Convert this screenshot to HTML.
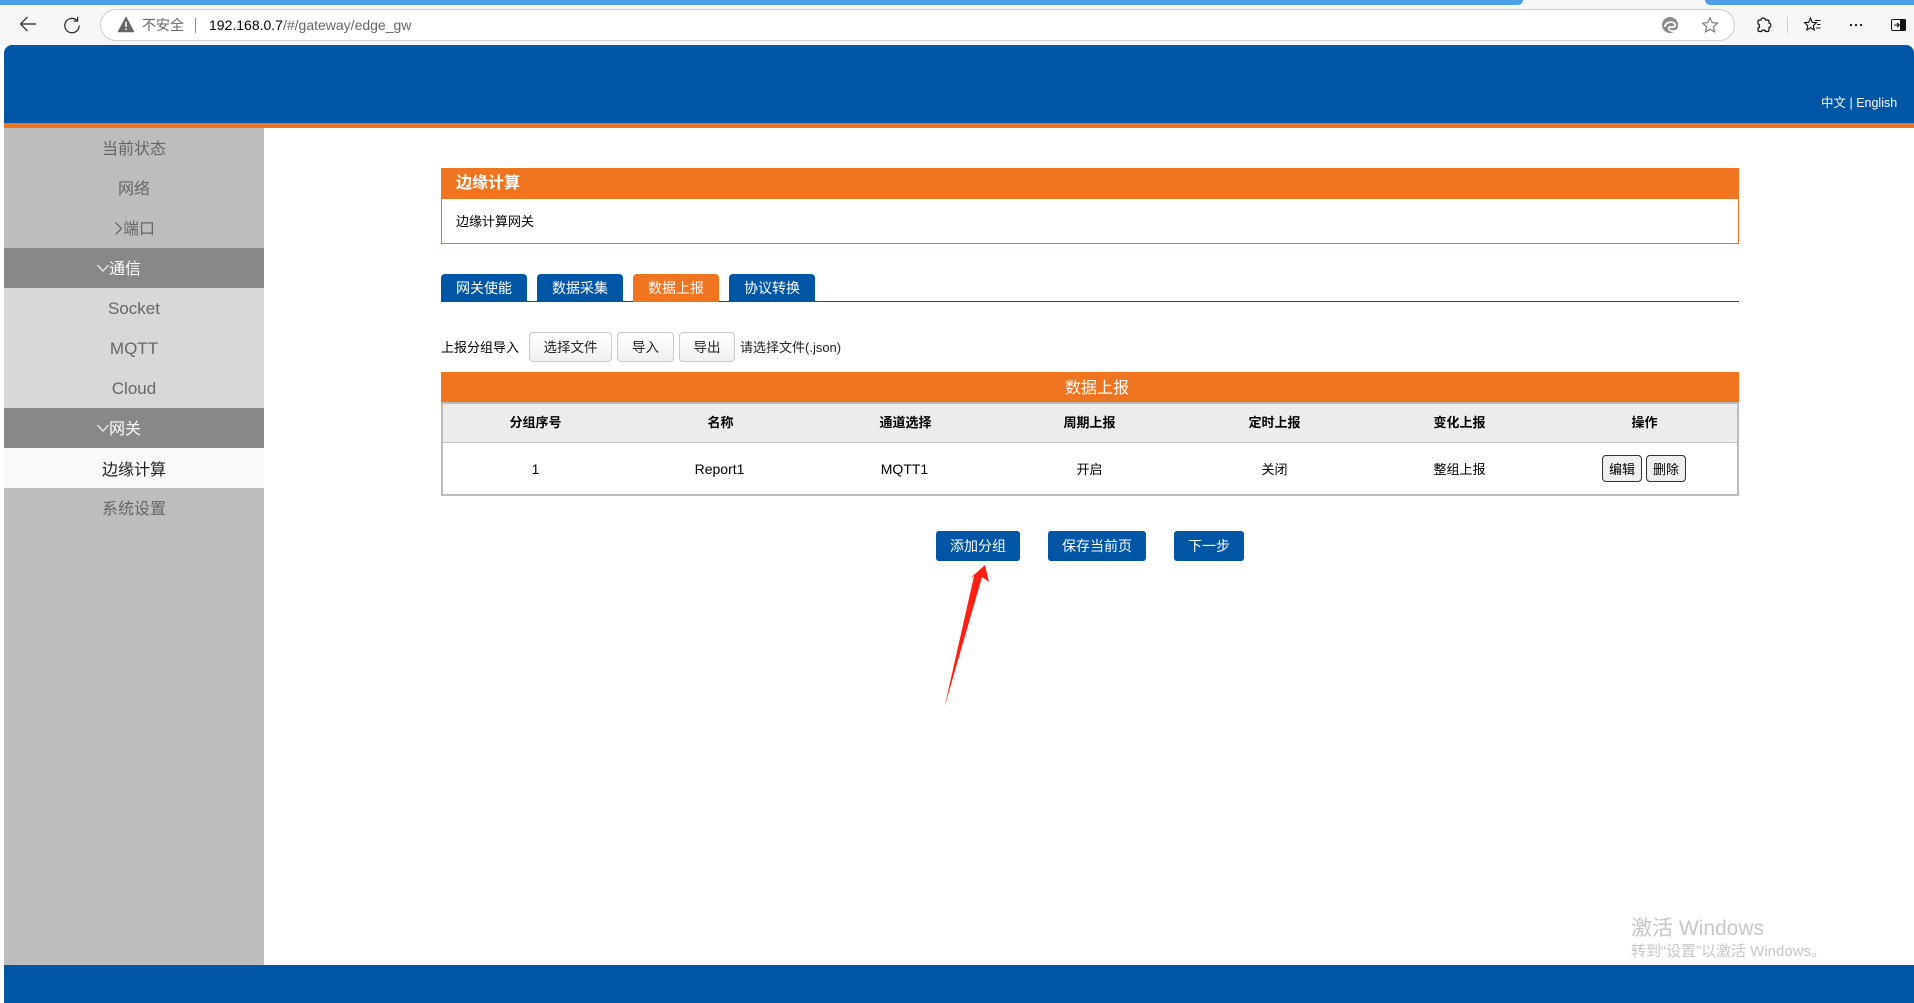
<!DOCTYPE html>
<html lang="zh-CN">
<head>
<meta charset="utf-8">
<title>边缘计算</title>
<style>
html,body{margin:0;padding:0;width:1914px;height:1003px;overflow:hidden;background:#fff}
body{position:relative;font-family:"Liberation Sans","Noto Sans CJK SC",sans-serif;color:#000}
.a{position:absolute;box-sizing:border-box}
.t{position:absolute;white-space:nowrap;line-height:1}
.c{display:flex;align-items:center;justify-content:center;white-space:nowrap}
.nav{left:4px;width:260px;height:40px;font-size:16px;color:#666;padding-bottom:2px}
.lat{font-size:17px;padding-bottom:0;padding-top:2px}
.tab{top:274px;width:86px;height:28px;background:#0055a5;color:#fff;font-size:14px;border-radius:4px 4px 0 0}
.fb{top:332px;height:30px;border:1px solid #c8c8c8;border-radius:4px;font-size:13.5px;color:#222;background:linear-gradient(#fff,#f0f0f0);padding-bottom:2px}
.th{top:404px;width:185px;height:38px;font-size:13px;font-weight:bold;padding-bottom:3px}
.td{top:443px;width:185px;height:51px;font-size:13px}
.td.l{font-size:14px}
.op{top:455px;width:40px;height:27px;background:#efefef;border:1px solid #333;border-radius:4px;font-size:13px}
.bb{top:531px;height:30px;background:#0055a5;color:#fff;font-size:14px;border-radius:3px}
svg{position:absolute;overflow:visible}
</style>
</head>
<body>
<!-- browser chrome -->
<div class="a" style="left:0;top:0;width:1914px;height:45px;background:#f7f7f7"></div>
<div class="a" style="left:0;top:0;width:1523px;height:5px;background:#4a9fe6;border-radius:0 0 6px 0"></div>
<div class="a" style="left:1705px;top:0;width:209px;height:5px;background:#4a9fe6;border-radius:0 0 0 6px"></div>
<div class="a" style="left:100px;top:9px;width:1635px;height:32px;background:#fff;border:1px solid #cfcfcf;border-radius:16px"></div>

<svg style="left:20px;top:16px" width="16" height="16" viewBox="0 0 16 16"><path d="M.5 8H16M.5 8L7.5 1M.5 8L7.5 15" fill="none" stroke="#222" stroke-width="1.2"/></svg>
<svg style="left:64px;top:17px" width="16" height="16" viewBox="0 0 16 16"><path d="M13 3.4A7.2 7.2 0 1 0 15.2 8.5M13.6 0V4H9.6" fill="none" stroke="#222" stroke-width="1.2"/></svg>
<svg style="left:118px;top:17px" width="16" height="15" viewBox="0 0 16 15"><path d="M8 .3L15.8 14.7H.2Z" fill="#666" stroke="#666" stroke-linejoin="round"/><path d="M8 4.8V10M8 11.2V12.9" stroke="#fff" stroke-width="1.5"/></svg>
<div class="t" style="left:142px;top:18px;font-size:14px;color:#666">不安全</div>
<div class="a" style="left:195px;top:18px;width:1px;height:15px;background:#888"></div>
<div class="t" style="left:209px;top:18px;font-size:14px;color:#666"><span style="color:#000">192.168.0.7</span>/#/gateway/edge_gw</div>

<svg style="left:1662px;top:17px" width="16" height="16" viewBox="0 0 16 16"><circle cx="8" cy="8" r="8" fill="#8a8a8a"/><path d="M2.5 10C4 5 10 3.5 13 7C14.5 9.5 11 10.5 8.5 10C6.5 9.8 6 11.5 7.5 13C9 14.5 12 14.8 15 13" fill="none" stroke="#fff" stroke-width="1.7"/></svg>
<svg style="left:1702px;top:17px" width="16" height="16" viewBox="0 0 16 16"><path d="M8 .8L10.2 5.6L15.4 6.2L11.5 9.7L12.6 14.9L8 12.3L3.4 14.9L4.5 9.7L.6 6.2L5.8 5.6Z" fill="none" stroke="#777" stroke-width="1.1"/></svg>
<svg style="left:1756px;top:17px" width="15" height="16" viewBox="0 0 15 16"><path d="M5 3C5 .3 9.5 .3 9.5 3H11.5C12.5 3 13 3.5 13 4.5V6C15.5 6 15.5 10.5 13 10.5V13C13 14 12.5 14.5 11.5 14.5H9.5C9.5 12.5 5.5 12.5 5.5 14.5H3.5C2.5 14.5 2 14 2 13V11C4 11 4 7 2 7V4.5C2 3.5 2.5 3 3.5 3Z" fill="none" stroke="#111" stroke-width="1.2"/></svg>
<div class="a" style="left:1787px;top:17px;width:1px;height:16px;background:#ccc"></div>
<svg style="left:1804px;top:17px" width="17" height="16" viewBox="0 0 17 16"><path d="M6.5 1L8.3 5.3L12.5 5.7L9.3 8.6L10.2 13L6.5 10.7L2.8 13L3.7 8.6L.5 5.7L4.7 5.3Z" fill="none" stroke="#111" stroke-width="1.1"/><path d="M11 3.5H16.5M13 7.5H16.5M12 11H16.5" stroke="#111" stroke-width="1"/></svg>
<svg style="left:1849px;top:23px" width="14" height="4" viewBox="0 0 14 4"><circle cx="2" cy="2" r="1.1" fill="#111"/><circle cx="7" cy="2" r="1.1" fill="#111"/><circle cx="12" cy="2" r="1.1" fill="#111"/></svg>
<svg style="left:1891px;top:19px" width="15" height="12" viewBox="0 0 15 12"><rect x=".5" y=".5" width="14" height="11" rx="1.5" fill="#fff" stroke="#111"/><rect x="9" y="0" width="6" height="12" rx="1.5" fill="#111"/><path d="M3 6H8M6 3.8L8.2 6L6 8.2" fill="none" stroke="#111" stroke-width="1.1"/></svg>

<!-- header -->
<div class="a" style="left:4px;top:45px;width:1910px;height:78px;background:#0055a5;border-radius:8px 8px 0 0"></div>
<div class="a" style="left:4px;top:123px;width:1910px;height:5px;background:#ee741f"></div>
<div class="t" style="left:1821px;top:97px;font-size:12.5px;color:#fff">中文 | English</div>

<!-- sidebar -->
<div class="a" style="left:4px;top:128px;width:260px;height:837px;background:#bdbdbd"></div>
<div class="a c nav" style="top:128px">当前状态</div>
<div class="a c nav" style="top:168px">网络</div>
<div class="a c nav" style="top:208px"><svg style="left:111px;top:14px" width="7" height="13" viewBox="0 0 7 13"><path d="M.5 .5L6.5 6.5L.5 12.5" fill="none" stroke="#555" stroke-width="1.1"/></svg><span style="margin-left:10px">端口</span></div>
<div class="a c nav" style="top:248px;background:#888;color:#fff"><svg style="left:93px;top:16px" width="12" height="8" viewBox="0 0 12 8"><path d="M.5 1L6 7L11.5 1" fill="none" stroke="#fff" stroke-width="1.1"/></svg><span style="margin-right:-2px;position:relative;left:-10px">通信</span></div>
<div class="a c nav lat" style="top:288px;background:#d8d8d8">Socket</div>
<div class="a c nav lat" style="top:328px;background:#d8d8d8">MQTT</div>
<div class="a c nav lat" style="top:368px;background:#d8d8d8">Cloud</div>
<div class="a c nav" style="top:408px;background:#888;color:#fff"><svg style="left:93px;top:16px" width="12" height="8" viewBox="0 0 12 8"><path d="M.5 1L6 7L11.5 1" fill="none" stroke="#fff" stroke-width="1.1"/></svg><span style="margin-right:-2px;position:relative;left:-10px">网关</span></div>
<div class="a c nav" style="top:448px;background:#f9f9f9;color:#222;padding-bottom:1px">边缘计算</div>
<div class="a c nav" style="top:488px">系统设置</div>

<!-- title box -->
<div class="a" style="left:441px;top:168px;width:1298px;height:76px;border:1px solid #ee741f"></div>
<div class="a" style="left:441px;top:168px;width:1298px;height:31px;background:#ee741f"></div>
<div class="t" style="left:456px;top:176px;font-size:16px;font-weight:bold;color:#fff">边缘计算</div>
<div class="t" style="left:456px;top:215px;font-size:13px">边缘计算网关</div>

<!-- tabs -->
<div class="a" style="left:441px;top:301px;width:1298px;height:1px;background:#3a4250"></div>
<div class="a c tab" style="left:441px">网关使能</div>
<div class="a c tab" style="left:537px">数据采集</div>
<div class="a c tab" style="left:633px;background:#ee741f">数据上报</div>
<div class="a c tab" style="left:729px">协议转换</div>

<!-- import row -->
<div class="t" style="left:441px;top:341px;font-size:13px">上报分组导入</div>
<div class="a c fb" style="left:529px;width:83px">选择文件</div>
<div class="a c fb" style="left:617px;width:57px">导入</div>
<div class="a c fb" style="left:679px;width:56px">导出</div>
<div class="t" style="left:740px;top:341px;font-size:13px;color:#222">请选择文件(.json)</div>

<!-- table -->
<div class="a c" style="left:441px;top:372px;width:1298px;height:30px;background:#ee741f;color:#fff;font-size:16px;padding-left:14px;padding-bottom:2px">数据上报</div>
<div class="a" style="left:441px;top:402px;width:1298px;height:94px;border:2px solid #bbb"></div>
<div class="a" style="left:443px;top:404px;width:1294px;height:38px;background:#ebecee"></div>
<div class="a" style="left:443px;top:442px;width:1294px;height:1px;background:#c4c4c4"></div>
<div class="a c th" style="left:443px">分组序号</div>
<div class="a c th" style="left:628px">名称</div>
<div class="a c th" style="left:813px">通道选择</div>
<div class="a c th" style="left:997px">周期上报</div>
<div class="a c th" style="left:1182px">定时上报</div>
<div class="a c th" style="left:1367px">变化上报</div>
<div class="a c th" style="left:1552px">操作</div>
<div class="a c td l" style="left:443px">1</div>
<div class="a c td l" style="left:627px">Report1</div>
<div class="a c td l" style="left:812px">MQTT1</div>
<div class="a c td" style="left:997px">开启</div>
<div class="a c td" style="left:1182px">关闭</div>
<div class="a c td" style="left:1367px">整组上报</div>
<div class="a c op" style="left:1602px">编辑</div>
<div class="a c op" style="left:1646px">删除</div>

<!-- action buttons -->
<div class="a c bb" style="left:936px;width:84px">添加分组</div>
<div class="a c bb" style="left:1048px;width:98px">保存当前页</div>
<div class="a c bb" style="left:1174px;width:70px">下一步</div>

<!-- annotation arrow -->
<svg style="left:0;top:0" width="1914" height="1003" viewBox="0 0 1914 1003"><path d="M985 565L989 582L982 577L944.5 707L974 576L970.5 578Z" fill="#ff1f12"/></svg>

<!-- watermark -->
<div class="t" style="left:1631px;top:918px;font-size:21px;color:#c6c6c6">激活 Windows</div>
<div class="t" style="left:1631px;top:944px;font-size:15px;color:#c6c6c6">转到“设置”以激活 Windows。</div>

<!-- footer -->
<div class="a" style="left:4px;top:965px;width:1910px;height:38px;background:#0055a5"></div>
</body>
</html>
